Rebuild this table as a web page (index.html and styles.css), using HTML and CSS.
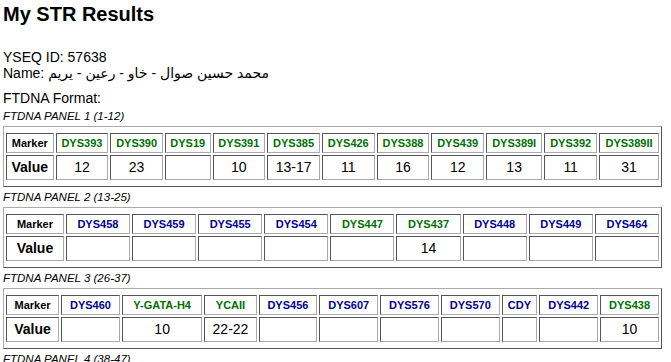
FILE: index.html
```html
<!DOCTYPE html>
<html>
<head>
<meta charset="utf-8">
<title>My STR Results</title>
<link rel="stylesheet" href="styles.css">
</head>
<body>
<h2 class="title">My STR Results</h2>
<div class="info">
  <div class="line">YSEQ ID: 57638</div>
  <div class="line">Name: محمد حسين صوال - خاو - رعين - يريم</div>
</div>
<div class="format">FTDNA Format:</div>

<div class="panel-label">FTDNA PANEL 1 (1-12)</div>
<table class="str">
  <tr class="head">
    <th class="lbl">Marker</th>
    <th class="g">DYS393</th><th class="g">DYS390</th><th class="g">DYS19</th><th class="g">DYS391</th><th class="g">DYS385</th><th class="g">DYS426</th><th class="g">DYS388</th><th class="g">DYS439</th><th class="g">DYS389I</th><th class="g">DYS392</th><th class="g">DYS389II</th>
  </tr>
  <tr class="vals">
    <th class="lbl">Value</th>
    <td>12</td><td>23</td><td></td><td>10</td><td>13-17</td><td>11</td><td>16</td><td>12</td><td>13</td><td>11</td><td>31</td>
  </tr>
</table>

<div class="panel-label">FTDNA PANEL 2 (13-25)</div>
<table class="str">
  <tr class="head">
    <th class="lbl">Marker</th>
    <th class="b">DYS458</th><th class="b">DYS459</th><th class="b">DYS455</th><th class="b">DYS454</th><th class="g">DYS447</th><th class="g">DYS437</th><th class="b">DYS448</th><th class="b">DYS449</th><th class="b">DYS464</th>
  </tr>
  <tr class="vals">
    <th class="lbl">Value</th>
    <td></td><td></td><td></td><td></td><td></td><td>14</td><td></td><td></td><td></td>
  </tr>
</table>

<div class="panel-label">FTDNA PANEL 3 (26-37)</div>
<table class="str">
  <tr class="head">
    <th class="lbl">Marker</th>
    <th class="b">DYS460</th><th class="g">Y-GATA-H4</th><th class="g">YCAII</th><th class="b">DYS456</th><th class="b">DYS607</th><th class="b">DYS576</th><th class="b">DYS570</th><th class="b">CDY</th><th class="b">DYS442</th><th class="g">DYS438</th>
  </tr>
  <tr class="vals">
    <th class="lbl">Value</th>
    <td></td><td>10</td><td>22-22</td><td></td><td></td><td></td><td></td><td></td><td></td><td>10</td>
  </tr>
</table>

<div class="panel-label">FTDNA PANEL 4 (38-47)</div>
</body>
</html>
```
FILE: styles.css
```css
html {
  background: #ffffff;
}
body {
  margin: 3px 9px 0 3px;
  font-family: "Liberation Sans", "DejaVu Sans", Arial, sans-serif;
  font-size: 14px;
  color: #000000;
}
.title {
  margin: 0 0 23px 0;
  font-size: 20px;
  line-height: 23px;
  font-weight: bold;
}
.info {
  margin: 0 0 9px 0;
}
.line {
  line-height: 16px;
  height: 16px;
}
.format {
  line-height: 16px;
  margin: 0 0 2px 0;
}
.panel-label {
  font-style: italic;
  font-size: 11.5px;
  line-height: 16px;
}
.str {
  width: 100%;
  margin: 2px 0;
  border: 1px solid;
  border-color: #aaaaaa #555555 #555555 #aaaaaa;
  border-spacing: 2px;
  padding: 4px 0;
  background: #ffffff;
}
.str th,
.str td {
  border: 1px solid;
  border-color: #555555 #aaaaaa #aaaaaa #555555;
  text-align: center;
}
.head th {
  font-size: 11px;
  line-height: 14px;
  padding: 2px 1px;
  font-weight: bold;
}
.vals th,
.vals td {
  font-size: 14px;
  line-height: 17px;
  padding: 3px 1px;
}
.vals th {
  font-weight: bold;
  font-size: 14px;
}
.g {
  color: #007000;
}
.b {
  color: #00008f;
}
```
